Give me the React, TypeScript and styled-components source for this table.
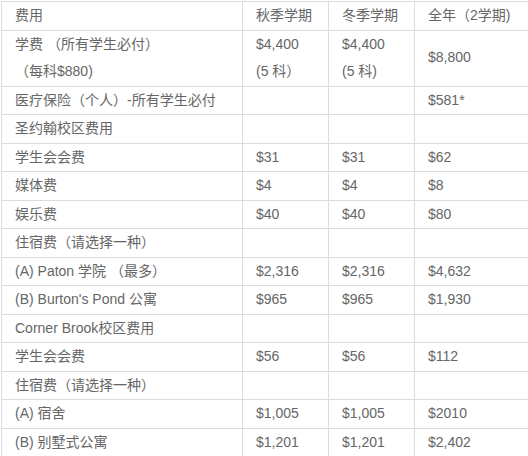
import React from 'react'
import styled, { createGlobalStyle } from 'styled-components'

const GlobalStyle = createGlobalStyle`
  html, body {
    margin: 0;
    padding: 0;
    background: #fff;
    overflow: hidden;
  }
`

const Page = styled.div`
  padding: 1px 0 0 1px;
  width: 528px;
  height: 456px;
  overflow: hidden;
  box-sizing: border-box;
`

const FeeTable = styled.table`
  border-collapse: collapse;
  table-layout: fixed;
  width: 560px;
  font-family: "Liberation Sans", "Noto Sans CJK SC", sans-serif;
  font-size: 14px;
  color: #666;
`

const Cell = styled.td<{ $top?: boolean }>`
  border: 1px solid #dcdcdc;
  padding: 0 0 0 13px;
  line-height: 27.5px;
  vertical-align: ${p => (p.$top ? 'top' : 'middle')};
  white-space: nowrap;
`

type Row = [string, string, string, string]

const rows: Row[] = [
  ['医疗保险（个人）-所有学生必付', '', '', '$581*'],
  ['圣约翰校区费用', '', '', ''],
  ['学生会会费', '$31', '$31', '$62'],
  ['媒体费', '$4', '$4', '$8'],
  ['娱乐费', '$40', '$40', '$80'],
  ['住宿费（请选择一种）', '', '', ''],
  ['(A) Paton 学院 （最多）', '$2,316', '$2,316', '$4,632'],
  ["(B) Burton's Pond 公寓", '$965', '$965', '$1,930'],
  ['Corner Brook校区费用', '', '', ''],
  ['学生会会费', '$56', '$56', '$112'],
  ['住宿费（请选择一种）', '', '', ''],
  ['(A) 宿舍', '$1,005', '$1,005', '$2010'],
  ['(B) 别墅式公寓', '$1,201', '$1,201', '$2,402'],
]

export default function App() {
  return (
    <>
      <GlobalStyle />
      <Page>
        <FeeTable>
          <colgroup>
            <col style={{ width: 241 }} />
            <col style={{ width: 86 }} />
            <col style={{ width: 86 }} />
            <col />
          </colgroup>
          <tbody>
            <tr>
              <Cell>费用</Cell>
              <Cell>秋季学期</Cell>
              <Cell>冬季学期</Cell>
              <Cell>全年（2学期)</Cell>
            </tr>
            <tr>
              <Cell $top>
                学费 （所有学生必付）
                <br />
                （每科$880)
              </Cell>
              <Cell $top>
                $4,400
                <br />
                (5 科）
              </Cell>
              <Cell $top>
                $4,400
                <br />
                (5 科)
              </Cell>
              <Cell>$8,800</Cell>
            </tr>
            {rows.map((r, i) => (
              <tr key={i}>
                {r.map((c, j) => (
                  <Cell key={j}>{c}</Cell>
                ))}
              </tr>
            ))}
          </tbody>
        </FeeTable>
      </Page>
    </>
  )
}
